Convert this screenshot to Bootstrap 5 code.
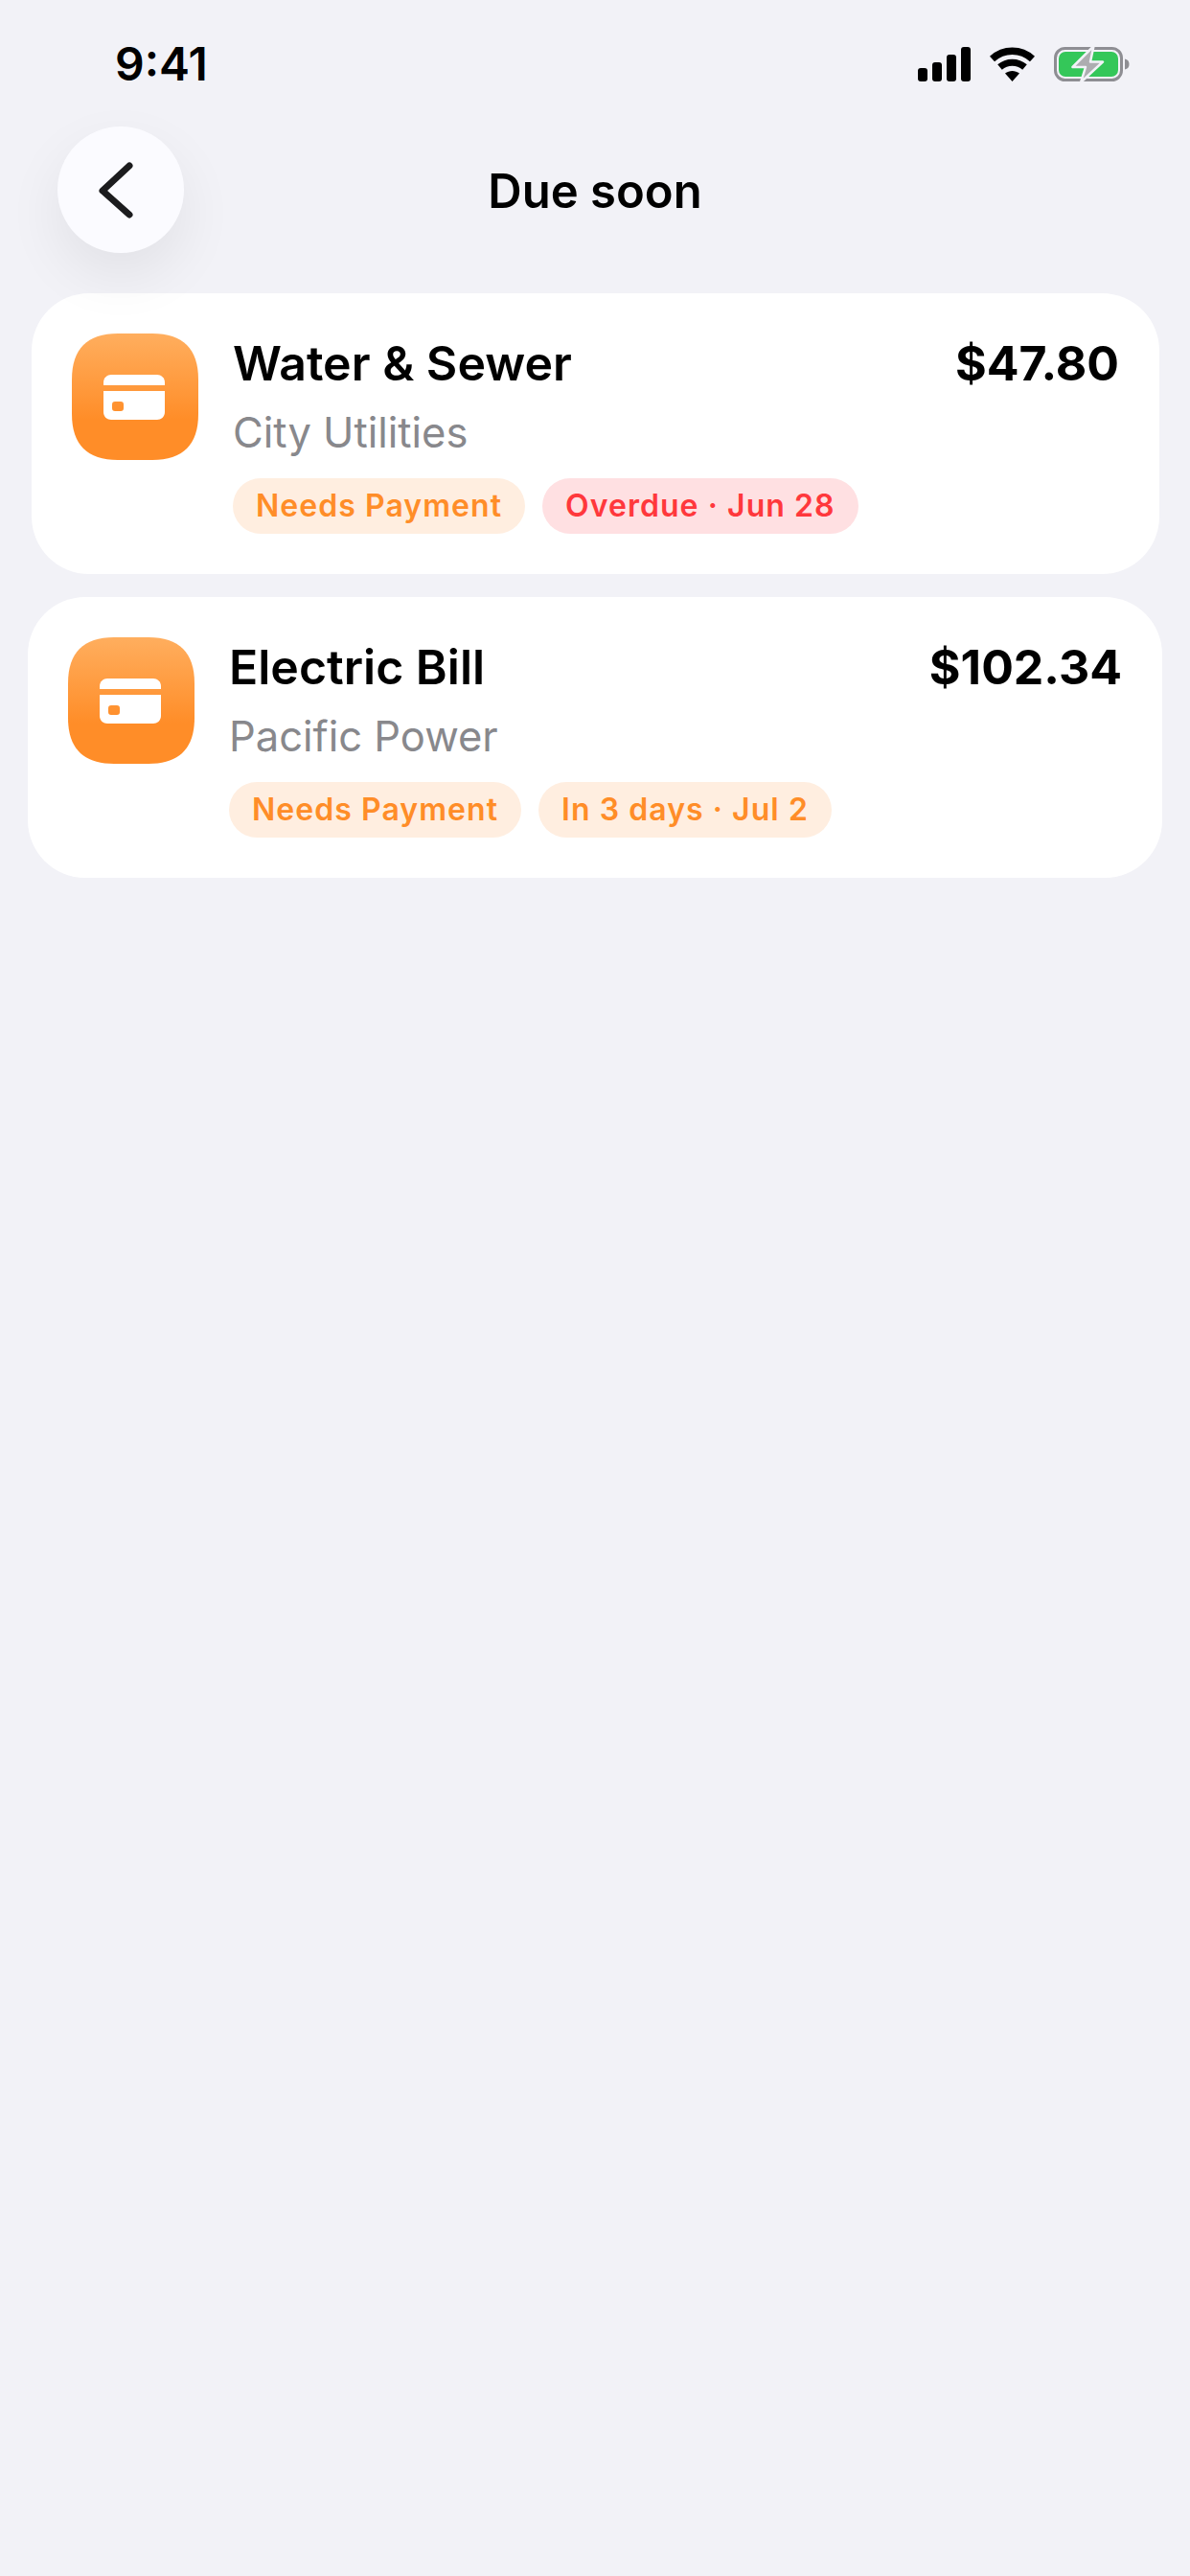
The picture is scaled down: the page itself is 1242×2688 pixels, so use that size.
<!DOCTYPE html>
<html lang="en">

<head>
  <meta charset="UTF-8" />
  <title>Due soon</title>
  <link href="https://cdn.jsdelivr.net/npm/bootstrap@5.3.0/dist/css/bootstrap.min.css" rel="stylesheet" />
  <script src="https://cdn.jsdelivr.net/npm/bootstrap@5.3.0/dist/js/bootstrap.bundle.min.js"></script>
  <style>
    body {
      background-color: #f2f2f7;
      font-family: Inter, "Liberation Sans", sans-serif;
      color: #000;
    }

    .status-row {
      height: 132px;
      padding: 0 62px 0 120px;
    }

    .status-time {
      font-size: 48px;
      font-weight: 600;
      line-height: 1;
      margin-top: 2px;
    }

    .status-icons {
      gap: 20px;
      margin-top: 2px;
    }

    .top-row {
      height: 132px;
      padding: 0 60px;
      display: grid;
      grid-template-columns: 132px 1fr 132px;
      align-items: center;
      position: relative;
      z-index: 2;
    }

    .back-btn {
      width: 132px;
      height: 132px;
      padding: 0;
      border: 0;
      border-radius: 50%;
      background-color: #fbfbff;
      box-shadow: 0 24px 60px rgba(0, 0, 0, 0.07);
    }

    .top-title {
      font-size: 49px;
      font-weight: 600;
      text-align: center;
      margin: 2px 0 0;
      line-height: 1;
    }

    .bill-list {
      padding-top: 42px;
      gap: 24px;
    }

    .bill-card {
      height: 293px;
      padding: 42px 42px 0;
      gap: 36px;
      background-color: #fff;
      border-radius: 60px;
    }

    .bill-first {
      margin: 0 32px 0 33px;
    }

    .bill-second {
      margin: 0 29px;
    }

    .bill-icon {
      width: 132px;
      height: 132px;
      flex-shrink: 0;
    }

    .bill-top {
      margin-top: 2px;
    }

    .bill-name,
    .bill-amount {
      font-size: 50px;
      line-height: 58px;
      margin: 0;
    }

    .bill-name {
      font-weight: 600;
    }

    .bill-amount {
      font-weight: 700;
    }

    .bill-sub {
      font-size: 43.5px;
      line-height: 54px;
      color: #88888c;
      margin: 16px 0 0;
    }

    .bill-tags {
      gap: 18px;
      margin-top: 21px;
    }

    .tag-pill {
      height: 58px;
      padding: 0 24px;
      border-radius: 29px;
      font-size: 32px;
      font-weight: 600;
      letter-spacing: 1.05px;
      line-height: 58px;
    }

    .tag-orange {
      background-color: #ffeee0;
      color: #ff8d28;
    }

    .tag-red {
      background-color: #ffe0e2;
      color: #ff383c;
    }
  </style>
</head>

<body>
  <svg width="0" height="0" class="d-block">
    <defs>
      <linearGradient id="iconFill" x1="0" y1="0" x2="0" y2="1">
        <stop offset="0" stop-color="#ffae5e" />
        <stop offset="0.68" stop-color="#ff8d28" />
      </linearGradient>
      <symbol id="billIcon" viewBox="0 0 132 132">
        <path fill="url(#iconFill)" d="M48 0H84C116 0 132 16 132 48V84C132 116 116 132 84 132H48C16 132 0 116 0 84V48C0 16 16 0 48 0Z" />
        <path fill="#fff" d="M33 54V51C33 46 37 43 41 43H89C93 43 97 46 97 51V54Z" />
        <path fill="#fff" fill-rule="evenodd" d="M33 60H97V82C97 87 93 90 89 90H41C37 90 33 87 33 82ZM45 71C43 71 42 72 42 74V78C42 80 43 81 45 81H51C53 81 54 80 54 78V74C54 72 53 71 51 71Z" />
      </symbol>
    </defs>
  </svg>

  <!-- status bar -->
  <div class="status-row d-flex justify-content-between align-items-center">
    <div class="status-time">9:41</div>
    <div class="status-icons d-flex align-items-center">
      <svg width="55" height="36" viewBox="0 0 55 36">
        <rect x="0" y="22" width="10" height="14" rx="3" />
        <rect x="15" y="16" width="10" height="20" rx="3" />
        <rect x="30" y="8" width="10" height="28" rx="3" />
        <rect x="45" y="0" width="10" height="36" rx="3" />
      </svg>
      <svg width="47" height="36" viewBox="0 0 47 36">
        <path fill="none" stroke="#000" stroke-width="7.5" d="M2.5 12.5C14.5 1.500 32.500 1.500 44.500 12.500" />
        <path fill="none" stroke="#000" stroke-width="7" d="M10.500 21C18 14.500 29 14.500 36.500 21" />
        <path d="M16 27.500C20.500 24 26.500 24 31 27.500L23.500 36Z" />
      </svg>
      <svg width="80" height="38" viewBox="0 -1 80 38">
        <rect x="1.500" y="1.500" width="69" height="33" rx="10" fill="none" stroke="#8e8e93" stroke-width="3" />
        <rect x="5" y="5" width="62" height="26" rx="7" fill="#34c759" />
        <path d="M74 12.500C77 13 78.500 15 78.500 18C78.500 21 77 23 74 23.500Z" fill="#8e8e93" />
        <path d="M41.500 -1L19.500 21H33L28 37L51 15.500H38Z" fill="#adadb0" stroke="#f2f2f7" stroke-width="2.500" stroke-linejoin="round" />
      </svg>
    </div>
  </div>

  <!-- header -->
  <div class="top-row">
    <button type="button" class="back-btn d-flex align-items-center justify-content-center">
      <svg width="132" height="132" viewBox="0 0 132 132">
        <path d="M75 41L47 67L75 92" fill="none" stroke="#1c1c1e" stroke-width="7" stroke-linecap="round" stroke-linejoin="round" />
      </svg>
    </button>
    <h1 class="top-title">Due soon</h1>
  </div>

  <!-- bills -->
  <div class="bill-list d-flex flex-column">
    <div class="bill-card bill-first d-flex">
      <svg class="bill-icon"><use href="#billIcon" /></svg>
      <div class="flex-grow-1">
        <div class="bill-top d-flex justify-content-between">
          <p class="bill-name">Water &amp; Sewer</p>
          <p class="bill-amount">$47.80</p>
        </div>
        <p class="bill-sub">City Utilities</p>
        <div class="bill-tags d-flex">
          <span class="tag-pill tag-orange">Needs Payment</span>
          <span class="tag-pill tag-red">Overdue · Jun 28</span>
        </div>
      </div>
    </div>

    <div class="bill-card bill-second d-flex">
      <svg class="bill-icon"><use href="#billIcon" /></svg>
      <div class="flex-grow-1">
        <div class="bill-top d-flex justify-content-between">
          <p class="bill-name">Electric Bill</p>
          <p class="bill-amount">$102.34</p>
        </div>
        <p class="bill-sub">Pacific Power</p>
        <div class="bill-tags d-flex">
          <span class="tag-pill tag-orange">Needs Payment</span>
          <span class="tag-pill tag-orange">In 3 days · Jul 2</span>
        </div>
      </div>
    </div>
  </div>
</body>

</html>
